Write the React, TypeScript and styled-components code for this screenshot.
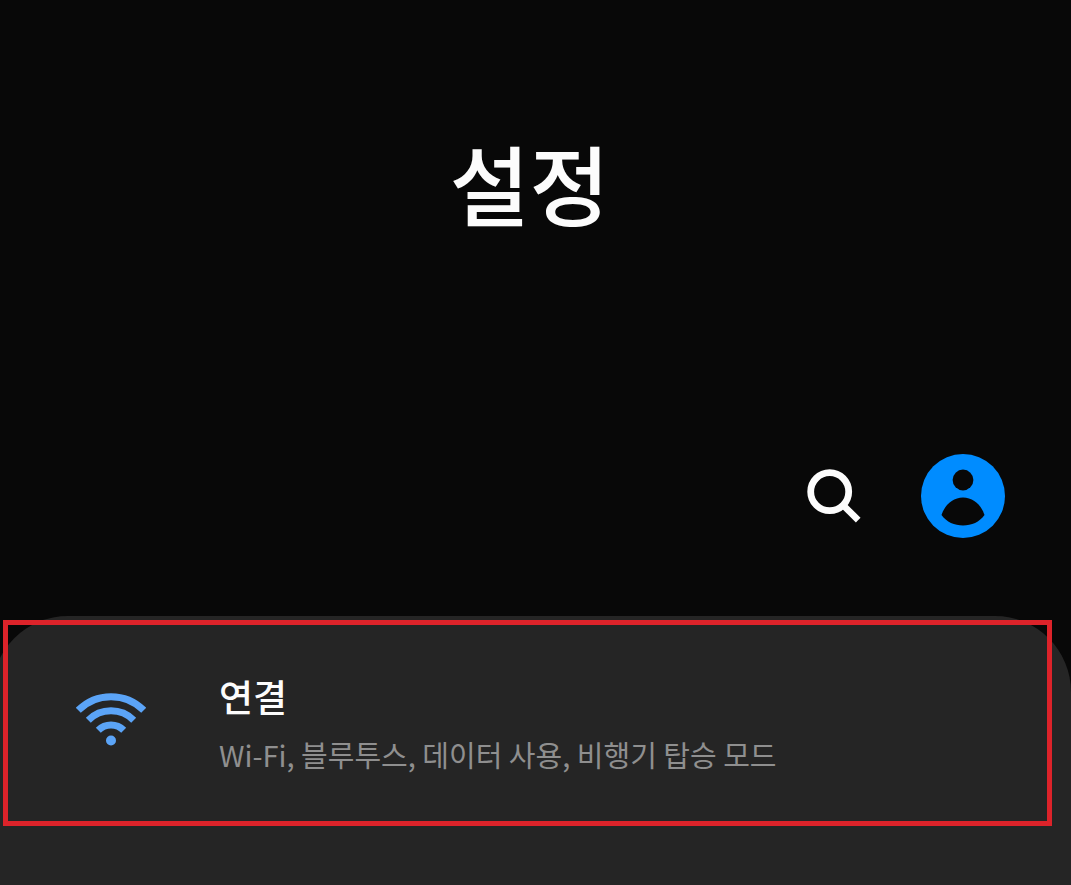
import React from "react";
import styled, { createGlobalStyle } from "styled-components";

const GlobalStyle = createGlobalStyle`
  * { box-sizing: border-box; }
  body {
    margin: 0;
    background: #080808;
    color: #fcfcfc;
    font-family: "Noto Sans CJK KR", sans-serif;
  }
`;

const Screen = styled.main`
  display: flex;
  flex-direction: column;
  min-height: 100vh;
  overflow: hidden;
`;

const Header = styled.header`
  padding: 132px 66px 78px;
`;

const Title = styled.h1`
  margin: 0 12px 0 0;
  font-size: 87px;
  line-height: 100px;
  font-weight: 500;
  text-align: center;
`;

const Toolbar = styled.div`
  display: flex;
  justify-content: flex-end;
  align-items: center;
  gap: 60px;
  margin-top: 222px;
`;

const IconButton = styled.button<{ $size: number }>`
  display: block;
  width: ${(p) => p.$size}px;
  height: ${(p) => p.$size}px;
  padding: 0;
  border: 0;
  background: none;
  cursor: pointer;

  svg {
    display: block;
    width: 100%;
    height: 100%;
  }
`;

const Sheet = styled.section`
  flex: 1;
  margin-left: -8px;
  padding: 4px 19px 59px 11px;
  border-radius: 76px 76px 0 0;
  background: #252525;
`;

const SettingLink = styled.a`
  display: flex;
  align-items: center;
  gap: 73px;
  min-height: 206px;
  padding: 0 67px 0 68px;
  border: 5px solid #dc232a;
  color: inherit;
  text-decoration: none;
`;

const WifiIcon = styled.svg`
  flex: none;
  width: 70px;
  height: 54px;
  margin-bottom: 8px;
`;

const Label = styled.span`
  display: flex;
  flex-direction: column;
  gap: 8px;
  padding-top: 4px;
`;

const Name = styled.strong`
  font-size: 37px;
  line-height: 50px;
  font-weight: 500;
`;

const Description = styled.span`
  color: #8f8f8f;
  font-size: 29px;
  line-height: 50px;
`;

export default function App() {
  return (
    <Screen>
      <GlobalStyle />
      <Header>
        <Title>설정</Title>
        <Toolbar>
          <IconButton $size={54} type="button" aria-label="검색">
            <svg viewBox="0 0 54 54" fill="none" stroke="#fcfcfc">
              <circle cx="22.7" cy="22.7" r="19" strokeWidth="6.8" />
              <path d="M35.5 35.5 51.2 51.2" strokeWidth="6.6" />
            </svg>
          </IconButton>
          <IconButton $size={84} type="button" aria-label="계정">
            <svg viewBox="0 0 84 84">
              <circle cx="42" cy="42" r="42" fill="#008cff" />
              <circle cx="42" cy="26" r="10.4" fill="#080808" />
              <path
                d="M20.5 61C24 50.5 32 43.500 42 43.500S60 50.500 63.500 61C58.500 68 50.500 71.500 42 71.500S25.500 68 20.500 61Z"
                fill="#080808"
              />
            </svg>
          </IconButton>
        </Toolbar>
      </Header>
      <Sheet>
        <SettingLink href="#connections">
          <WifiIcon viewBox="0 0 70 54" aria-hidden="true">
            <g fill="none" stroke="#5ba4f7" strokeWidth="7">
              <path d="M2.300 18.200A46.200 46.200 0 0 1 67.700 18.200" />
              <path d="M12.300 28.200A32.100 32.100 0 0 1 57.700 28.200" />
              <path d="M22.300 38.200A18 18 0 0 1 47.700 38.200" />
            </g>
            <circle cx="35" cy="48.500" r="5" fill="#5ba4f7" />
          </WifiIcon>
          <Label>
            <Name>연결</Name>
            <Description>Wi-Fi, 블루투스, 데이터 사용, 비행기 탑승 모드</Description>
          </Label>
        </SettingLink>
      </Sheet>
    </Screen>
  );
}
